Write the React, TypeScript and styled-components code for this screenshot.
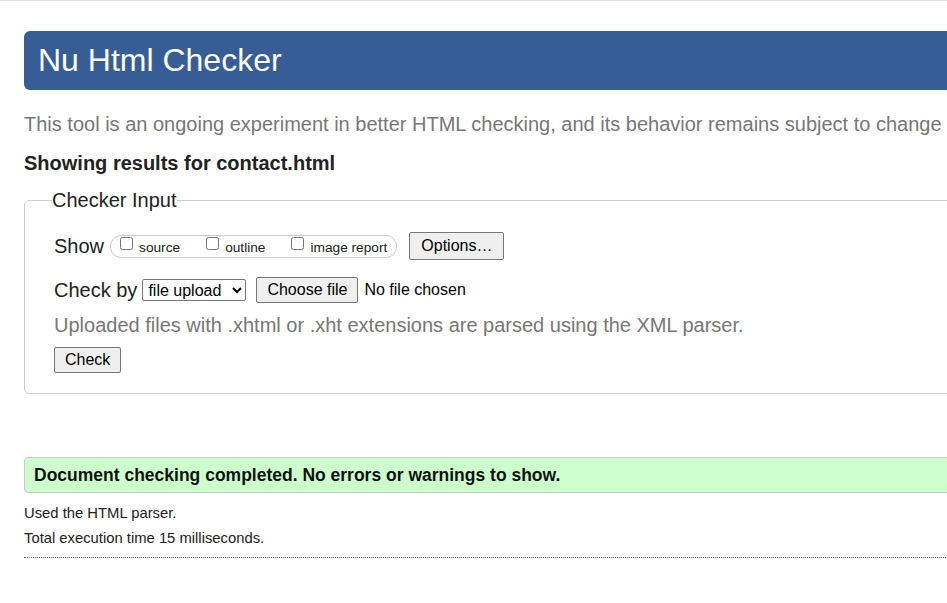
import React from 'react'
import styled, { createGlobalStyle } from 'styled-components'

const GlobalStyle = createGlobalStyle`
    html, body {
        margin: 0;
        padding: 0;
        overflow: hidden;
        background: #fff;
    }
    body {
        font-family: "Liberation Sans", Arial, sans-serif;
        color: #222;
    }
`

const TopRule = styled.div`
    height: 1px;
    background-color: #dedede;
`
const Page = styled.div`
    width: 1180px;
    padding-left: 24px;
`
const Title = styled.h1`
    margin: 30px 0 0;
    height: 59px;
    display: flex;
    align-items: center;
    padding-left: 14px;
    background-color: #365d96;
    color: #fff;
    font-size: 32px;
    font-weight: normal;
    border-radius: 6px;
`
const Intro = styled.p`
    margin: 22px 0 0;
    font-size: 20px;
    line-height: 24px;
    color: #777;
    white-space: nowrap;
`
const ResultsFor = styled.h2`
    margin: 15px 0 0;
    font-size: 20px;
    line-height: 24px;
    font-weight: bold;
    color: #222;
`
const InputFieldset = styled.fieldset`
    margin: 13px 0 0;
    padding: 0 0 20px 29px;
    border: 1px solid #ccc;
    border-radius: 5px;
    min-width: 0;
`
const Legend = styled.legend`
    margin-left: -2px;
    padding: 0;
    font-size: 20px;
    line-height: 24px;
    color: #222;
`
const Row = styled.div<{ $top: number }>`
    display: flex;
    align-items: center;
    margin-top: ${p => p.$top}px;
`
const RowLabel = styled.span<{ $gap: number }>`
    font-size: 20px;
    line-height: 24px;
    color: #222;
    margin-right: ${p => p.$gap}px;
`
const ShowGroup = styled.div`
    display: flex;
    align-items: center;
    height: 21px;
    padding: 0 9px 0 5px;
    border: 1px solid #ccc;
    border-radius: 11px;
    margin-right: 12px;
`
const ShowItem = styled.label`
    display: flex;
    align-items: center;
    font-size: 13.7px;
    color: #222;
    margin-right: 22px;
    &:last-child {
        margin-right: 0;
    }
    input {
        margin: 0 6px 5px 4px;
        width: 13px;
        height: 13px;
    }
    span {
        padding-top: 3px;
    }
`
const Button = styled.button<{ $h: number; $pad?: number }>`
    height: ${p => p.$h}px;
    padding: 0 ${p => p.$pad ?? 10}px;
    font-family: "Liberation Sans", Arial, sans-serif;
    font-size: 16px;
    color: #000;
    background-color: #efefef;
    border: 1px solid #767676;
    border-radius: 2px;
`
const Select = styled.select`
    width: 104px;
    height: 22px;
    margin-right: 10px;
    padding: 0 0 0 1px;
    font-family: "Liberation Sans", Arial, sans-serif;
    font-size: 16px;
    color: #000;
    background-color: #fff;
    border: 1px solid #767676;
    border-radius: 2px;
`
const NoFile = styled.span`
    margin-left: 6px;
    font-size: 16px;
    color: #000;
`
const Hint = styled.p`
    margin: 10px 0 0;
    font-size: 20px;
    line-height: 24px;
    color: #777;
`
const CheckWrap = styled.div`
    margin-top: 10px;
`
const Success = styled.div`
    margin-top: 63px;
    height: 34px;
    display: flex;
    align-items: center;
    padding-left: 9px;
    background-color: #ccffcc;
    border: 1px solid #c8c8c8;
    border-radius: 4px;
    font-size: 17.5px;
    font-weight: bold;
    color: #111;
`
const Details = styled.div`
    margin-top: 12px;
    padding-bottom: 10px;
    border-bottom: 1px dotted #666;
`
const DetailLine = styled.p`
    margin: 0;
    font-size: 14.8px;
    line-height: 17px;
    color: #222;
    & + & {
        margin-top: 8px;
    }
`

const showOptions = ['source', 'outline', 'image report']

const App = () => {
    return (
        <>
            <GlobalStyle />
            <TopRule />
            <Page>
                <Title>{'Nu Html Checker'}</Title>
                <Intro>{'This tool is an ongoing experiment in better HTML checking, and its behavior remains subject to change'}</Intro>
                <ResultsFor>{'Showing results for contact.html'}</ResultsFor>
                <InputFieldset>
                    <Legend>{'Checker Input'}</Legend>
                    <Row $top={20}>
                        <RowLabel $gap={6}>{'Show'}</RowLabel>
                        <ShowGroup>
                            {
                                showOptions.map(o => (
                                    <ShowItem key={o}>
                                        <input type="checkbox" />
                                        <span>{o}</span>
                                    </ShowItem>
                                ))
                            }
                        </ShowGroup>
                        <Button $h={28} $pad={11}>{'Options…'}</Button>
                    </Row>
                    <Row $top={17}>
                        <RowLabel $gap={5}>{'Check by'}</RowLabel>
                        <Select defaultValue="file">
                            <option value="file">{'file upload'}</option>
                            <option value="address">{'address'}</option>
                            <option value="text">{'text input'}</option>
                        </Select>
                        <Button $h={26}>{'Choose file'}</Button>
                        <NoFile>{'No file chosen'}</NoFile>
                    </Row>
                    <Hint>{'Uploaded files with .xhtml or .xht extensions are parsed using the XML parser.'}</Hint>
                    <CheckWrap>
                        <Button $h={26}>{'Check'}</Button>
                    </CheckWrap>
                </InputFieldset>
                <Success>{'Document checking completed. No errors or warnings to show.'}</Success>
                <Details>
                    <DetailLine>{'Used the HTML parser.'}</DetailLine>
                    <DetailLine>{'Total execution time 15 milliseconds.'}</DetailLine>
                </Details>
            </Page>
        </>
    )
}

export default App
